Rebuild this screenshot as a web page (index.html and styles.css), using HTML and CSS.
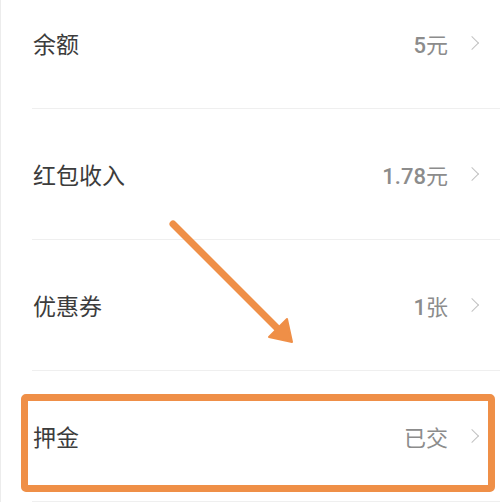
FILE: index.html
```html
<!DOCTYPE html>
<html lang="zh-CN">
<head>
  <meta charset="UTF-8">
  <meta name="viewport" content="width=device-width, initial-scale=1.0">
  <title>钱包</title>
  <link rel="stylesheet" href="styles.css">
</head>
<body>
  <div class="page">
    <!-- Wallet rows -->
    <ul class="wallet-list">
      <li class="row">
        <span class="label">余额</span>
        <span class="value"><b>5</b>元</span>
        <span class="chevron"></span>
      </li>
      <li class="row">
        <span class="label">红包收入</span>
        <span class="value"><b>1.78</b>元</span>
        <span class="chevron"></span>
      </li>
      <li class="row">
        <span class="label">优惠券</span>
        <span class="value"><b>1</b>张</span>
        <span class="chevron"></span>
      </li>
      <li class="row highlight">
        <span class="label">押金</span>
        <span class="value">已交</span>
        <span class="chevron"></span>
      </li>
    </ul>

    <!-- Annotation arrow -->
    <svg class="arrow" width="500" height="502" viewBox="0 0 500 502">
      <line x1="173" y1="224" x2="282" y2="333" stroke="#ef8f47" stroke-width="7" stroke-linecap="round"/>
      <polygon points="292,342 269,337 287,319" fill="#ef8f47" stroke="#ef8f47" stroke-width="2" stroke-linejoin="round"/>
    </svg>
  </div>
</body>
</html>
```

FILE: styles.css
```css
/* Global */
body {
  margin: 0;
  background: #ffffff;
  font-family: "Noto Sans CJK SC", "Noto Sans", sans-serif;
}
.page {
  position: relative;
  width: 500px;
  height: 502px;
  overflow: hidden;
  border-left: 1px solid #ececec;
  box-sizing: border-box;
}

/* List */
.wallet-list {
  list-style: none;
  margin: -22px 0 0 31px;
  padding: 0;
}
.row {
  position: relative;
  display: flex;
  align-items: center;
  height: 131px;
  box-sizing: border-box;
  padding: 0 22px 0 1px;
  border-bottom: 1px solid #efefef;
}
.label {
  flex: 1;
  font-size: 23px;
  color: #3c3c3c;
}
.value {
  font-size: 22px;
  color: #8c8c8c;
}
.value b {
  font-family: Roboto, sans-serif;
  font-weight: 500;
}
.chevron {
  width: 9px;
  height: 9px;
  margin-left: 19px;
  margin-right: 1px;
  border-top: 1.5px solid #c2c2c2;
  border-right: 1.5px solid #c2c2c2;
  transform: rotate(45deg);
}

/* Highlight box */
.highlight::after {
  content: "";
  position: absolute;
  left: -11px;
  top: 23px;
  right: 5px;
  bottom: 9px;
  border: 7px solid #ef8f47;
  border-radius: 5px;
}

/* Arrow */
.arrow {
  position: absolute;
  left: -1px;
  top: 0;
}
```
